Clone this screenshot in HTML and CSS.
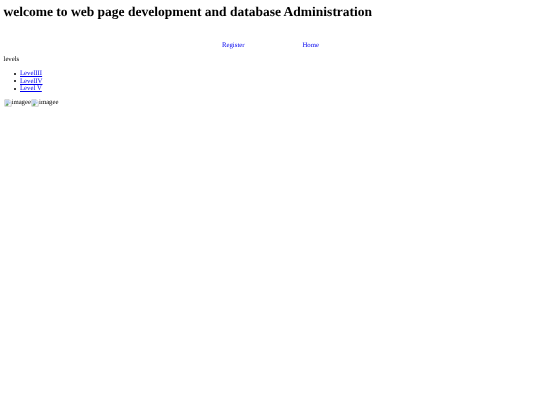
FILE: index.html
```html
<!DOCTYPE html>
<html lang="en">
<head>
    <meta charset="UTF-8">
    <title>Web page development</title>
    <link rel="stylesheet" href="styles.css">
</head>
<body>
    <h1 class="title">welcome to web page development and database Administration</h1>

    <div class="nav">
        <a href="#">Register</a>
        <a href="#">Home</a>
    </div>

    <p class="levels-label">levels</p>
    <ul class="levels">
        <li><a href="#">LevelIII</a></li>
        <li><a href="#">LevelIV</a></li>
        <li><a href="#">Level V</a></li>
    </ul>

    <div class="pictures">
        <span class="broken-img">
            <svg class="broken-icon" viewBox="0 0 16 16"><path d="M1.5 1.5h9l4 4v9h-13z" fill="#fff" stroke="#9a9a9a"/><path d="M2.5 2.5h8v3h3v3l-11 5z" fill="#bcd0ee"/><path d="M2.5 13.5l4-5 3 3-2 2z" fill="#5fa04e"/></svg>imagee
        </span>
        <span class="broken-img">
            <svg class="broken-icon" viewBox="0 0 16 16"><path d="M1.5 1.5h9l4 4v9h-13z" fill="#fff" stroke="#9a9a9a"/><path d="M2.5 2.5h8v3h3v3l-11 5z" fill="#bcd0ee"/><path d="M2.5 13.5l4-5 3 3-2 2z" fill="#5fa04e"/></svg>imagee
        </span>
    </div>
</body>
</html>
```

FILE: styles.css
```css
* {
    box-sizing: border-box;
}

body {
    margin: 0;
    padding: 3px 3.5px;
    background-color: #fff;
    color: #000;
    font-family: "Liberation Serif", "Times New Roman", serif;
    font-size: 6.75px;
    line-height: 8px;
    text-rendering: geometricPrecision;
    filter: blur(0.3px);
}

a {
    color: #00e;
}

.title {
    margin: 0;
    font-size: 13.5px;
    line-height: 17px;
    font-weight: bold;
}

.nav {
    display: flex;
    gap: 58px;
    margin-top: 22px;
    padding-left: 218.5px;
}

.nav a {
    text-decoration: none;
}

.levels-label {
    margin: 6px 0 0;
}

.levels {
    margin: 6px 0 0;
    padding-left: 10px;
    list-style: none;
}

.levels li {
    display: flex;
    align-items: center;
    gap: 4.5px;
    line-height: 7.5px;
}

.levels li::before {
    content: "";
    width: 2px;
    height: 2px;
    border-radius: 50%;
    background-color: #000;
}

.pictures {
    display: flex;
    margin-top: 6px;
}

.broken-img {
    display: flex;
    align-items: flex-start;
}

.broken-icon {
    width: 8px;
    height: 8px;
}
```
